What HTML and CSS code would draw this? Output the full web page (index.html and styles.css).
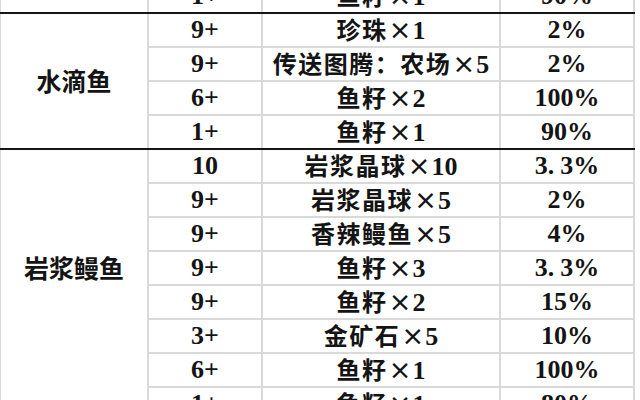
FILE: index.html
```html
<!DOCTYPE html>
<html lang="zh">
<head>
<meta charset="utf-8">
<link rel="stylesheet" href="styles.css">
</head>
<body>
<table class="drops">
  <colgroup>
    <col class="c1"><col class="c2"><col class="c3"><col class="c4">
  </colgroup>
  <tr>
    <td class="end"></td>
    <td class="end num">1+</td>
    <td class="end item"><span class="cn">鱼籽</span><span class="x">×</span>1</td>
    <td class="end num">90%</td>
  </tr>
  <tr>
    <td class="fish end" rowspan="4"><span class="cn">水滴鱼</span></td>
    <td class="num">9+</td>
    <td class="item"><span class="cn">珍珠</span><span class="x">×</span>1</td>
    <td class="num">2%</td>
  </tr>
  <tr>
    <td class="num">9+</td>
    <td class="item"><span class="cn">传送图腾：农场</span><span class="x">×</span>5</td>
    <td class="num">2%</td>
  </tr>
  <tr>
    <td class="num">6+</td>
    <td class="item"><span class="cn">鱼籽</span><span class="x">×</span>2</td>
    <td class="num">100%</td>
  </tr>
  <tr>
    <td class="end num">1+</td>
    <td class="end item"><span class="cn">鱼籽</span><span class="x">×</span>1</td>
    <td class="end num">90%</td>
  </tr>
  <tr>
    <td class="fish low" rowspan="8"><span class="cn">岩浆鳗鱼</span></td>
    <td class="num">10</td>
    <td class="item"><span class="cn">岩浆晶球</span><span class="x">×</span>10</td>
    <td class="num">3.<span class="gap"></span>3%</td>
  </tr>
  <tr>
    <td class="num">9+</td>
    <td class="item"><span class="cn">岩浆晶球</span><span class="x">×</span>5</td>
    <td class="num">2%</td>
  </tr>
  <tr>
    <td class="num">9+</td>
    <td class="item"><span class="cn">香辣鳗鱼</span><span class="x">×</span>5</td>
    <td class="num">4%</td>
  </tr>
  <tr>
    <td class="num">9+</td>
    <td class="item"><span class="cn">鱼籽</span><span class="x">×</span>3</td>
    <td class="num">3.<span class="gap"></span>3%</td>
  </tr>
  <tr>
    <td class="num">9+</td>
    <td class="item"><span class="cn">鱼籽</span><span class="x">×</span>2</td>
    <td class="num">15%</td>
  </tr>
  <tr>
    <td class="num">3+</td>
    <td class="item"><span class="cn">金矿石</span><span class="x">×</span>5</td>
    <td class="num">10%</td>
  </tr>
  <tr>
    <td class="num">6+</td>
    <td class="item"><span class="cn">鱼籽</span><span class="x">×</span>1</td>
    <td class="num">100%</td>
  </tr>
  <tr>
    <td class="num">1+</td>
    <td class="item"><span class="cn">鱼籽</span><span class="x">×</span>1</td>
    <td class="num">80%</td>
  </tr>
</table>
</body>
</html>
```
FILE: styles.css
```css
html, body {
  margin: 0;
  padding: 0;
  background: #ffffff;
  overflow: hidden;
}

.drops {
  border-collapse: collapse;
  table-layout: fixed;
  width: 634px;
  margin-top: -22px;
  margin-left: -1px;
  color: #141414;
  font-family: "Liberation Serif", "Noto Sans CJK SC", serif;
  font-size: 26px;
  font-weight: 700;
}

.c1 { width: 148px; }
.c2 { width: 114px; }
.c3 { width: 238px; }
.c4 { width: 134px; }

.drops td {
  border: 2px solid #d9d9d9;
  height: 31.75px;
  padding: 0;
  text-align: center;
  vertical-align: middle;
  line-height: 30px;
  white-space: nowrap;
}

.drops td.end {
  border-bottom: 2px solid #161616;
}

.num {
  font-weight: 700;
}

.cn {
  font-family: "Noto Sans CJK SC", sans-serif;
  font-weight: 700;
  font-size: 24px;
  letter-spacing: 1.5px;
}

.x {
  display: inline-block;
  width: 25px;
  text-align: center;
  font-family: "DejaVu Sans", sans-serif;
  font-weight: 400;
  font-size: 27px;
}

.gap {
  display: inline-block;
  width: 6px;
}

.fish .cn {
  font-size: 25px;
  letter-spacing: 0;
}

.fish.low {
  padding-bottom: 34px;
}
```
